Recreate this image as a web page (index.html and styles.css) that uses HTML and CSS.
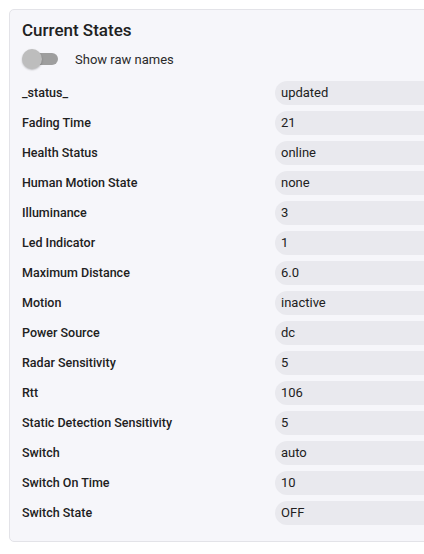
FILE: index.html
```html
<!DOCTYPE html>
<html>
<head>
<meta charset="utf-8">
<link rel="stylesheet" href="styles.css">
</head>
<body>
<div class="card">
  <h2 class="title">Current States</h2>
  <div class="toggle-row">
    <span class="switch"><span class="track"></span><span class="thumb"></span></span>
    <span class="toggle-label">Show raw names</span>
  </div>
  <div class="states">
    <div class="name">_status_</div><div class="value">updated</div>
    <div class="name">Fading Time</div><div class="value">21</div>
    <div class="name">Health Status</div><div class="value">online</div>
    <div class="name">Human Motion State</div><div class="value">none</div>
    <div class="name">Illuminance</div><div class="value">3</div>
    <div class="name">Led Indicator</div><div class="value">1</div>
    <div class="name">Maximum Distance</div><div class="value">6.0</div>
    <div class="name">Motion</div><div class="value">inactive</div>
    <div class="name">Power Source</div><div class="value">dc</div>
    <div class="name">Radar Sensitivity</div><div class="value">5</div>
    <div class="name">Rtt</div><div class="value">106</div>
    <div class="name">Static Detection Sensitivity</div><div class="value">5</div>
    <div class="name">Switch</div><div class="value">auto</div>
    <div class="name">Switch On Time</div><div class="value">10</div>
    <div class="name">Switch State</div><div class="value">OFF</div>
  </div>
</div>
</body>
</html>
```
FILE: styles.css
```css
html, body {
  margin: 0;
  padding: 0;
  background: #ffffff;
  overflow: hidden;
}
body {
  font-family: Roboto, "Liberation Sans", sans-serif;
  color: #212121;
}
.card {
  margin: 9px 0 0 9px;
  width: 430px;
  height: 533px;
  box-sizing: border-box;
  background: #f6f6fa;
  border: 1px solid #e3e3e8;
  border-radius: 5px;
  padding: 10px 12px 0 12px;
}
.title {
  margin: 0;
  font-size: 17px;
  font-weight: 500;
  line-height: 20px;
  color: #212121;
}
.toggle-row {
  display: flex;
  align-items: center;
  height: 22px;
  margin-top: 8px;
}
.switch {
  position: relative;
  width: 36px;
  height: 20px;
  display: inline-block;
}
.track {
  position: absolute;
  left: 1px;
  top: 4px;
  width: 35px;
  height: 12px;
  border-radius: 6px;
  background: #9e9e9e;
}
.thumb {
  position: absolute;
  left: 0;
  top: 0;
  width: 20px;
  height: 20px;
  border-radius: 50%;
  background: #bdbdbd;
  box-shadow: 0 1px 2px rgba(0,0,0,0.25);
}
.toggle-label {
  margin-left: 17px;
  font-size: 13px;
  color: #2a2a2a;
}
.states {
  display: grid;
  grid-template-columns: 253px 1fr;
  row-gap: 6px;
  margin-top: 11px;
}
.name {
  font-size: 12.5px;
  font-weight: 500;
  line-height: 24px;
  color: #212121;
}
.value {
  background: #e9e9ee;
  border-radius: 12px 0 0 12px;
  height: 24px;
  line-height: 24px;
  padding-left: 6px;
  font-size: 13px;
  color: #212121;
}
```
